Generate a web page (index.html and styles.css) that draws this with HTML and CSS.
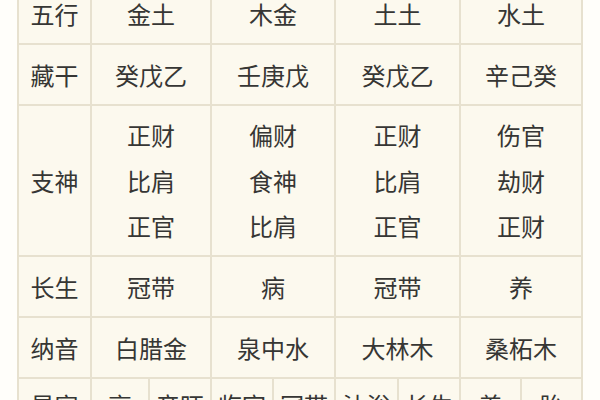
FILE: index.html
```html
<!DOCTYPE html>
<html lang="zh-CN">
<head>
<meta charset="utf-8">
<title>八字排盘</title>
<link rel="stylesheet" href="styles.css">
</head>
<body>
<div class="chart">
  <div class="cell label">五行</div>
  <div class="cell span2">金土</div>
  <div class="cell span2">木金</div>
  <div class="cell span2">土土</div>
  <div class="cell span2">水土</div>

  <div class="cell label">藏干</div>
  <div class="cell span2">癸戊乙</div>
  <div class="cell span2">壬庚戊</div>
  <div class="cell span2">癸戊乙</div>
  <div class="cell span2">辛己癸</div>

  <div class="cell label tall">支神</div>
  <div class="cell span2 stack"><span>正财</span><span>比肩</span><span>正官</span></div>
  <div class="cell span2 stack"><span>偏财</span><span>食神</span><span>比肩</span></div>
  <div class="cell span2 stack"><span>正财</span><span>比肩</span><span>正官</span></div>
  <div class="cell span2 stack"><span>伤官</span><span>劫财</span><span>正财</span></div>

  <div class="cell label">长生</div>
  <div class="cell span2">冠带</div>
  <div class="cell span2">病</div>
  <div class="cell span2">冠带</div>
  <div class="cell span2">养</div>

  <div class="cell label">纳音</div>
  <div class="cell span2">白腊金</div>
  <div class="cell span2">泉中水</div>
  <div class="cell span2">大林木</div>
  <div class="cell span2">桑柘木</div>

  <div class="cell label last">星宿</div>
  <div class="cell last">衰</div>
  <div class="cell last">帝旺</div>
  <div class="cell last">临官</div>
  <div class="cell last">冠带</div>
  <div class="cell last">沐浴</div>
  <div class="cell last">长生</div>
  <div class="cell last">养</div>
  <div class="cell last">胎</div>
</div>
</body>
</html>
```

FILE: styles.css
```css
html, body {
  margin: 0;
  padding: 0;
  background: #fffefa;
  overflow: hidden;
}

body {
  width: 600px;
  height: 400px;
  font-family: "Noto Sans CJK SC", "Noto Sans", sans-serif;
  color: #363634;
}

.chart {
  display: grid;
  grid-template-columns: 71px 56px 60px 60px 60px 61px 60px 59px 59px;
  grid-template-rows: 59px 59px 149px 59px 59px 59px;
  gap: 2px;
  padding: 2px;
  margin: -18px 0 0 17px;
  width: 566px;
  box-sizing: border-box;
  background: #e7e1cf;
}

.cell {
  background: #fcf9ee;
  display: flex;
  align-items: center;
  justify-content: center;
  font-size: 24px;
  line-height: 1;
  white-space: nowrap;
  overflow: hidden;
}

.span2 {
  grid-column: span 2;
}

.stack {
  flex-direction: column;
}

.stack span {
  display: block;
  line-height: 45.5px;
}

.last {
  align-items: flex-start;
  padding-top: 14px;
}
```
